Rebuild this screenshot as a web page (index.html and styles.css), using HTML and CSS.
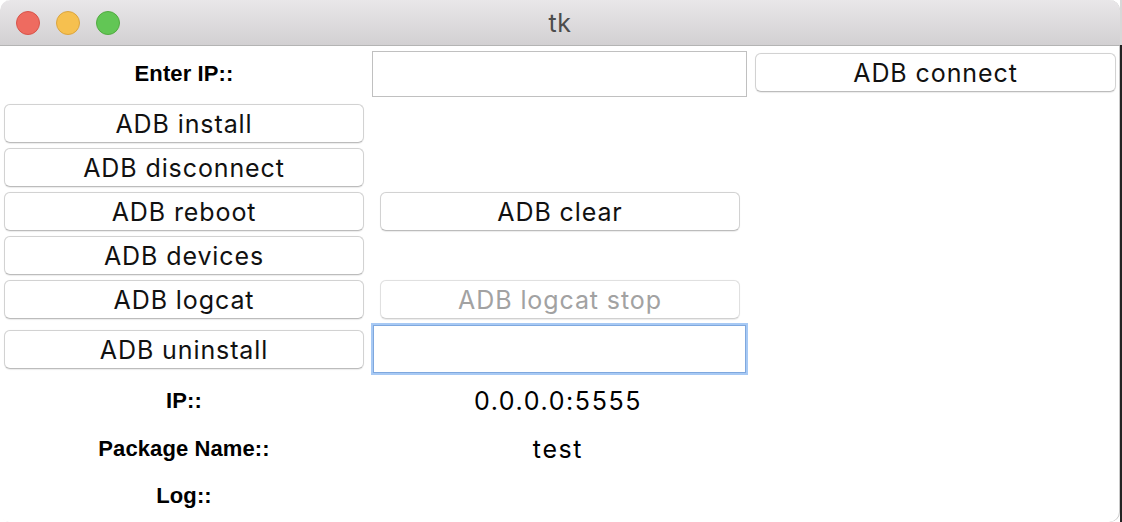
FILE: index.html
```html
<!DOCTYPE html>
<html lang="en">
<head>
<meta charset="utf-8">
<title>tk</title>
<link rel="stylesheet" href="styles.css">
</head>
<body>
<div class="screen">
  <div class="window">
    <div class="titlebar">
      <div class="lights">
        <span class="light red"></span>
        <span class="light yellow"></span>
        <span class="light green"></span>
      </div>
      <div class="title">tk</div>
    </div>
    <div class="content">
      <div class="label">Enter IP::</div>
      <input class="entry" type="text">
      <button class="btn c3">ADB connect</button>

      <button class="btn c1">ADB install</button>
      <div class="empty"></div>
      <div class="empty"></div>

      <button class="btn c1">ADB disconnect</button>
      <div class="empty"></div>
      <div class="empty"></div>

      <button class="btn c1">ADB reboot</button>
      <button class="btn c2">ADB clear</button>
      <div class="empty"></div>

      <button class="btn c1">ADB devices</button>
      <div class="empty"></div>
      <div class="empty"></div>

      <button class="btn c1">ADB logcat</button>
      <button class="btn c2" disabled>ADB logcat stop</button>
      <div class="empty"></div>

      <button class="btn c1">ADB uninstall</button>
      <input class="entry focused" type="text">
      <div class="empty"></div>

      <div class="label">IP::</div>
      <div class="value">0.0.0.0:5555</div>
      <div class="empty"></div>

      <div class="label">Package Name::</div>
      <div class="value">test</div>
      <div class="empty"></div>

      <div class="label">Log::</div>
      <div class="value"></div>
      <div class="empty"></div>
    </div>
  </div>
  <div class="desktop">
    <div class="desk-top"></div>
    <div class="desk-dark"></div>
  </div>
</div>
</body>
</html>
```
FILE: styles.css
```css
* { box-sizing: border-box; }
html, body {
  margin: 0;
  padding: 0;
  width: 1122px;
  height: 522px;
  overflow: hidden;
  background: #ffffff;
}
.screen {
  display: flex;
  width: 1122px;
  height: 522px;
}
.window {
  width: 1120px;
  height: 522px;
  background: #ffffff;
  border-radius: 10px 10px 10px 10px;
  overflow: hidden;
  display: flex;
  flex-direction: column;
  box-shadow: inset -1px 0 0 #c8c8c8;
}
.desktop {
  width: 2px;
  display: flex;
  flex-direction: column;
}
.desk-top { height: 45px; background: #d8d8d8; }
.desk-dark { flex: 1; background: #232323; }

.titlebar {
  height: 46px;
  flex: 0 0 46px;
  background: linear-gradient(#e9e7e9, #d2d0d2);
  border-bottom: 1px solid #b4b4b4;
  display: flex;
  align-items: center;
  position: relative;
  border-radius: 10px 10px 0 0;
}
.lights {
  display: flex;
  gap: 16px;
  padding-left: 16px;
}
.light {
  width: 24px;
  height: 24px;
  border-radius: 50%;
  display: block;
}
.red { background: #ee6b60; border: 1px solid #d8544a; }
.yellow { background: #f6c04f; border: 1px solid #dba53f; }
.green { background: #62c655; border: 1px solid #52ab41; }
.title {
  position: absolute;
  left: 0;
  right: 0;
  top: 0;
  bottom: 0;
  display: flex;
  align-items: center;
  justify-content: center;
  font-family: Inter, "Liberation Sans", sans-serif;
  font-size: 25px;
  letter-spacing: 0.5px;
  color: #4c4c4c;
  padding-left: 0;
}

.content {
  display: grid;
  grid-template-columns: 368px 384px 368px;
  grid-template-rows: 55px 44px 44px 44px 44px 44px 56px 48px 48px 46px;
  align-items: center;
}
.label {
  font-family: "Liberation Sans", Arial, sans-serif;
  font-weight: bold;
  font-size: 22px;
  letter-spacing: 0.1px;
  color: #000;
  text-align: center;
}
.value {
  font-family: Inter, "Liberation Sans", sans-serif;
  font-size: 25px;
  letter-spacing: 1.6px;
  color: #000;
  text-align: center;
  padding-right: 4px;
}
.btn {
  height: 39px;
  background: #ffffff;
  border: 1px solid #d2d2d2;
  border-bottom-color: #bcbcbc;
  border-radius: 6px;
  box-shadow: 0 0.5px 1px rgba(0,0,0,0.08);
  font-family: Inter, "Liberation Sans", sans-serif;
  font-size: 25px;
  color: #111;
  padding: 1px 0 0 0;
  letter-spacing: 0.9px;
}
.btn:disabled { color: #a2a2a2; border-color: #e0e0e0; border-bottom-color: #d0d0d0; }
.c1 { margin: 0 4px 0 4px; }
.c2 { margin: 0 12px 0 12px; }
.c3 { margin: -3px 4px 0 3px; }
.entry {
  height: 46px;
  margin: 0 5px 0 4px;
  border: 1px solid #c0c0c0;
  background: #fff;
  border-radius: 0;
  outline: none;
}
.entry.focused {
  height: 48px;
  margin: 0 6px 0 5px;
  border: 1px solid #7fa8de;
  box-shadow: 0 0 0 2px #a7c9f4;
}
```
